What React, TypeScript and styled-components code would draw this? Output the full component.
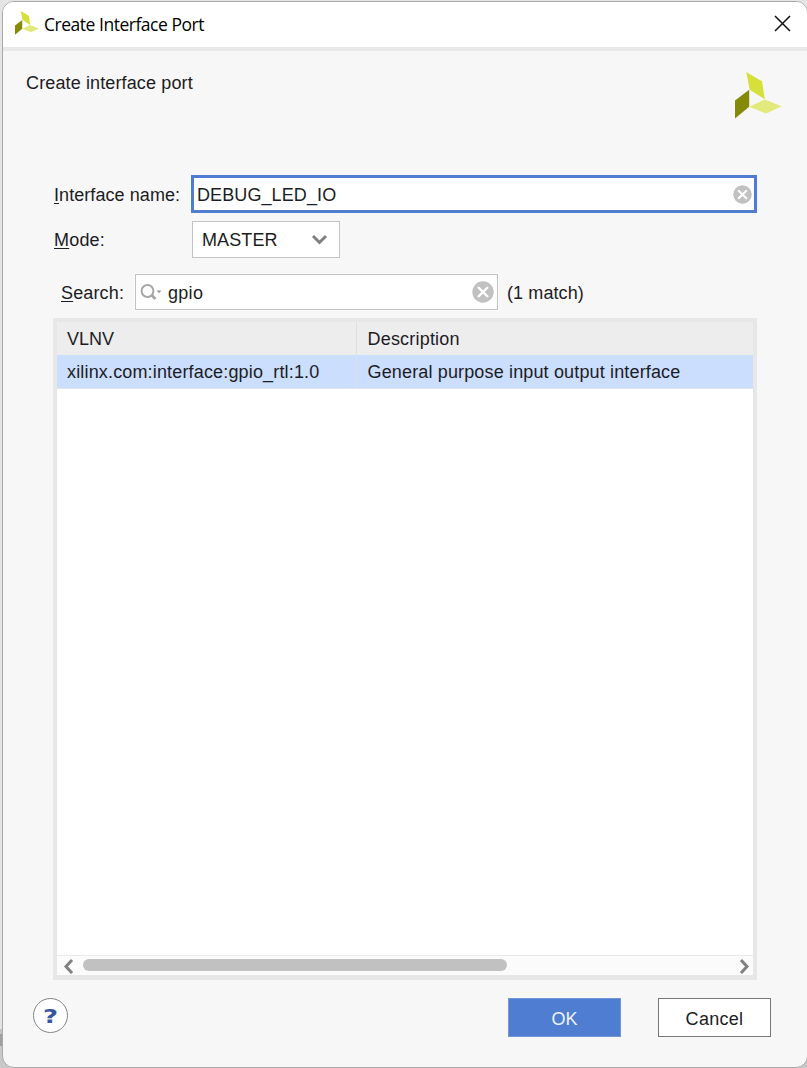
import React from "react";
import styled, { createGlobalStyle } from "styled-components";

const GlobalStyle = createGlobalStyle`
  * { box-sizing: border-box; }
  html, body { margin: 0; padding: 0; overflow: hidden; }
  body {
    background: #dedede;
    font-family: "Liberation Sans", Arial, sans-serif;
    font-size: 18px;
    color: #1c1c24;
  }
`;

const Desktop = styled.div`
  width: 807px;
  height: 1068px;
  padding: 1px 0 0 2px;
  background: linear-gradient(#e4e4e4 0 1029px, #c4c4c4 1029px 1034px, #a0a0a0 1034px 1046px, #c8c8c8 1046px);
`;

const Window = styled.div`
  display: flex;
  flex-direction: column;
  width: 806px;
  height: 1067px;
  border: 1px solid #a9a9a9;
  border-radius: 12px;
  background: #f7f7f7;
  overflow: hidden;
`;

const TitleBar = styled.header`
  display: flex;
  align-items: center;
  height: 49px;
  flex: none;
  padding: 0 16px 3px 12px;
  background: #fff;
  border-bottom: 4px solid #e8e8e8;
`;

const Title = styled.h1`
  flex: 1;
  margin: 2px 0 0 5px;
  font: 400 17.5px/24px "Open Sans", "Noto Sans", sans-serif;
  letter-spacing: -0.48px;
  color: #000;
`;

const Text = styled.span<{ $track?: number }>`
  line-height: 22px;
  white-space: pre;
  letter-spacing: ${(p) => p.$track ?? 0}px;
`;

const Mnemonic = styled.span`
  text-decoration: underline;
  text-decoration-thickness: 1px;
  text-underline-offset: 2px;
`;

const Intro = styled.section`
  display: flex;
  justify-content: space-between;
  height: 124px;
  flex: none;
  padding: 21px 25px 0 23px;
`;

const Form = styled.form`
  display: flex;
  flex-direction: column;
  padding: 0 50px 0 51px;
`;

const Field = styled.div<{ $height: number; $top?: number; $indent?: number }>`
  display: flex;
  align-items: center;
  height: ${(p) => p.$height}px;
  margin-top: ${(p) => p.$top ?? 0}px;
  padding-left: ${(p) => p.$indent ?? 0}px;
`;

const Label = styled.label<{ $width: number; $drop?: number }>`
  width: ${(p) => p.$width}px;
  flex: none;
  display: flex;
  padding-top: ${(p) => p.$drop ?? 0}px;
`;

const NameInput = styled.div`
  display: flex;
  flex: 1;
  align-items: center;
  justify-content: space-between;
  height: 38px;
  padding: 0 2px 0 3px;
  border: 3px solid #4f7dd1;
  background: #fff;
`;

const NameValue = styled.div`
  display: flex;
  padding-top: 2px;
`;

const Select = styled.div`
  display: flex;
  align-items: center;
  justify-content: space-between;
  width: 148px;
  height: 37px;
  margin: 0 0 1px 1px;
  padding: 1px 11px 0 9px;
  border: 1px solid #c4c4c4;
  background: #fff;
`;

const SearchInput = styled.div`
  display: flex;
  align-items: center;
  width: 363px;
  height: 36px;
  margin-right: 9px;
  padding: 0 3px 0 4px;
  border: 1px solid #c2c2c2;
  box-shadow: 0 0 0 1px #fcfcfc;
  background: #fff;
`;

const Query = styled.div`
  flex: 1;
  display: flex;
  padding: 1px 0 0 6px;
`;

const MatchCount = styled.div`
  display: flex;
  padding-top: 2px;
`;

const Table = styled.section`
  display: flex;
  flex-direction: column;
  width: 704px;
  height: 662px;
  margin: 8px 0 0 50px;
  flex: none;
  border: 4px solid #e7e7e7;
  border-bottom-width: 5px;
  background: #fff;
`;

const Row = styled.div<{ $selected?: boolean }>`
  display: grid;
  grid-template-columns: 300px 1fr;
  height: ${(p) => (p.$selected ? 34 : 33)}px;
  background: ${(p) => (p.$selected ? "#cbdefe" : "#ededed")};
  border-bottom: ${(p) => (p.$selected ? "1px solid #e2e7ef" : "none")};
`;

const Cell = styled.div`
  display: flex;
  align-items: center;
  padding: 0 0 0 10px;
  border-right: 1px solid #dedfe3;
  &:last-child { border-right: 0; padding-left: 10.5px; }
`;

const ScrollBar = styled.div`
  display: flex;
  align-items: center;
  height: 20px;
  margin-top: auto;
  padding: 0 3px 0 6px;
  border-top: 1px solid #e9e9e9;
  background: #fbfbfb;
`;

const Track = styled.div`
  flex: 1;
  margin: 0 9px 2px 9px;
`;

const Thumb = styled.div`
  width: 424px;
  height: 12px;
  border-radius: 6px;
  background: #c1c1c1;
`;

const Footer = styled.footer`
  display: flex;
  align-items: flex-start;
  padding: 18px 36px 0 30px;
`;

const Help = styled.button`
  width: 35px;
  height: 35px;
  margin-right: auto;
  padding: 0;
  border: 1.5px solid #858585;
  border-radius: 50%;
  background: #fff;
  color: #38589c;
  font: 700 20px/32px "DejaVu Sans", sans-serif;
`;

const HelpMark = styled.span`
  display: block;
  transform: scaleX(1.3);
`;

const Button = styled.button<{ $primary?: boolean }>`
  width: 113px;
  height: 39px;
  margin-left: ${(p) => (p.$primary ? 0 : 37)}px;
  padding: 3px 0 0;
  border: 1px solid ${(p) => (p.$primary ? "#7395d6" : "#777")};
  background: ${(p) => (p.$primary ? "#4f7dd1" : "#fff")};
  color: ${(p) => (p.$primary ? "#edf2fc" : "#1c1c24")};
  font: inherit;
  letter-spacing: ${(p) => (p.$primary ? 0 : 0.3)}px;
`;

const Logo = ({ size }: { size: number }) => (
  <svg width={size} height={size} viewBox="0 0 48 48">
    <path d="M11.5 0 27.5 9.5 30.5 28 15 18Z" fill="#d5e03b" />
    <path d="M0 29 14.5 18V35.5L0 47.5Z" fill="#858a08" />
    <path d="M14.5 35.5 30.5 28 47.5 35 32 42.5Z" fill="#e3ea7c" />
  </svg>
);

const ClearIcon = ({ size }: { size: number }) => (
  <svg width={size} height={size} viewBox="0 0 22 22">
    <circle cx="11" cy="11" r="10.7" fill="#c1c1c1" />
    <path d="m6 6 10 10M16 6 6 16" stroke="#fff" strokeWidth="2.4" />
  </svg>
);

const Arrow = ({ flip }: { flip?: boolean }) => (
  <svg width="11" height="16" viewBox="0 0 11 16">
    <path d={flip ? "m2 2 6 6.5L2 15" : "M9 2 3 8.5 9 15"} fill="none" stroke="#808080" strokeWidth="3" />
  </svg>
);

export default function App() {
  return (
    <Desktop>
      <GlobalStyle />
      <Window>
        <TitleBar>
          <Logo size={24} />
          <Title>Create Interface Port</Title>
          <svg width="17" height="17" viewBox="0 0 17 17">
            <path d="m1 1 15 15M16 1 1 16" stroke="#111" strokeWidth="1.5" />
          </svg>
        </TitleBar>
        <Intro>
          <Text $track={0.13}>Create interface port</Text>
          <Logo size={47} />
        </Intro>
        <Form>
          <Field $height={38}>
            <Label $width={137} $drop={2}>
              <Text $track={0.07}><Mnemonic>I</Mnemonic>nterface name:</Text>
            </Label>
            <NameInput>
              <NameValue><Text $track={0.1}>DEBUG_LED_IO</Text></NameValue>
              <ClearIcon size={19} />
            </NameInput>
          </Field>
          <Field $height={38} $top={8}>
            <Label $width={137}>
              <Text $track={0.2}><Mnemonic>M</Mnemonic>ode:</Text>
            </Label>
            <Select>
              <Text $track={0.1}>MASTER</Text>
              <svg width="17" height="12" viewBox="0 0 17 12">
                <path d="m2 2 6.5 6.5L15 2" fill="none" stroke="#808080" strokeWidth="3" />
              </svg>
            </Select>
          </Field>
          <Field $height={36} $top={15} $indent={7}>
            <Label $width={74} $drop={2}>
              <Text $track={0.15}><Mnemonic>S</Mnemonic>earch:</Text>
            </Label>
            <SearchInput>
              <svg width="22" height="18" viewBox="0 0 22 18">
                <circle cx="7.5" cy="8" r="5.9" fill="none" stroke="#a6a6a6" strokeWidth="2" />
                <path d="m11.5 12 4 4" stroke="#a6a6a6" strokeWidth="2.8" />
                <path d="M16.5 7.5h5L19 10.2Z" fill="#9c9c9c" />
              </svg>
              <Query><Text $track={0.3}>gpio</Text></Query>
              <ClearIcon size={22} />
            </SearchInput>
            <MatchCount><Text $track={0.1}>(1 match)</Text></MatchCount>
          </Field>
        </Form>
        <Table>
          <Row>
            <Cell><Text>VLNV</Text></Cell>
            <Cell><Text $track={0.2}>Description</Text></Cell>
          </Row>
          <Row $selected>
            <Cell><Text $track={0.16}>xilinx.com:interface:gpio_rtl:1.0</Text></Cell>
            <Cell><Text $track={0.15}>General purpose input output interface</Text></Cell>
          </Row>
          <ScrollBar>
            <Arrow />
            <Track><Thumb /></Track>
            <Arrow flip />
          </ScrollBar>
        </Table>
        <Footer>
          <Help><HelpMark>?</HelpMark></Help>
          <Button $primary>OK</Button>
          <Button>Cancel</Button>
        </Footer>
      </Window>
    </Desktop>
  );
}
